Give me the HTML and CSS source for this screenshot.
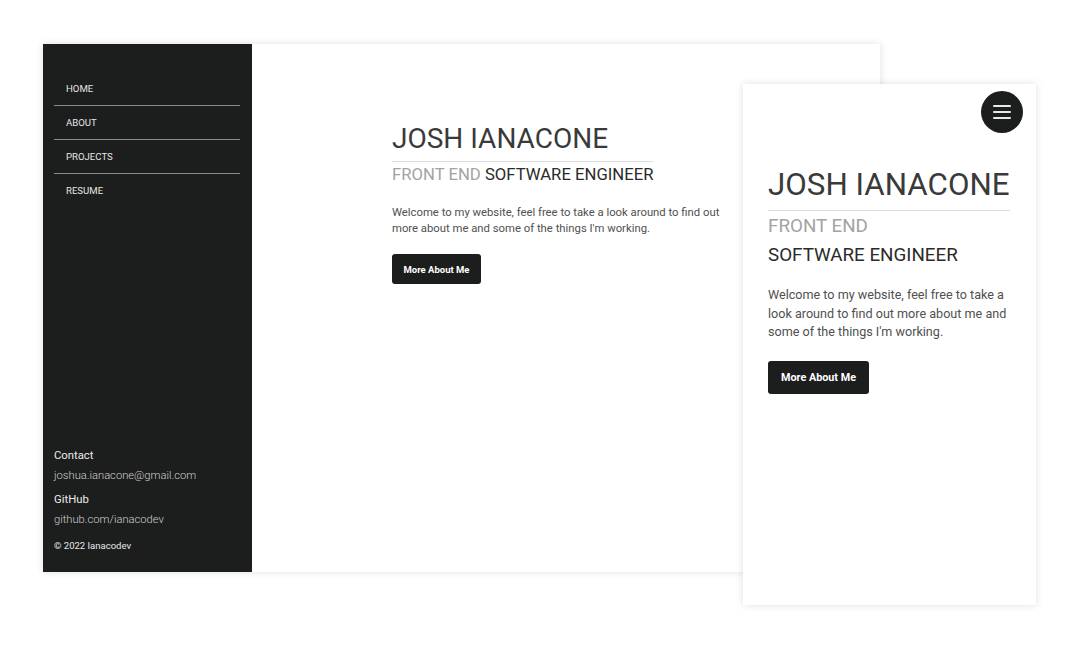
FILE: index.html
```html
<!DOCTYPE html>
<html lang="en">
<head>
<meta charset="utf-8">
<title>Josh Ianacone</title>
<link rel="stylesheet" href="styles.css">
</head>
<body>
<div class="canvas">
  <div class="window desktop">
    <aside class="sidebar">
      <nav class="nav">
        <a class="nav-link" href="#">HOME</a>
        <a class="nav-link" href="#">ABOUT</a>
        <a class="nav-link" href="#">PROJECTS</a>
        <a class="nav-link" href="#">RESUME</a>
      </nav>
      <div class="side-footer">
        <div class="label">Contact</div>
        <div class="value">joshua.ianacone@gmail.com</div>
        <div class="label">GitHub</div>
        <div class="value">github.com/ianacodev</div>
        <div class="copy">© 2022 Ianacodev</div>
      </div>
    </aside>
    <main class="main">
      <section class="hero">
        <h1 class="name">JOSH IANACONE</h1>
        <h2 class="role"><span class="muted">FRONT END</span> SOFTWARE ENGINEER</h2>
        <p class="intro">Welcome to my website, feel free to take a look around to find out more about me and some of the things I'm working.</p>
        <a class="btn" href="#">More About Me</a>
      </section>
    </main>
  </div>

  <div class="window mobile">
    <div class="mobile-top">
      <button class="burger" aria-label="Menu">
        <svg width="18" height="14" viewBox="0 0 18 14"><rect x="0" y="0" width="18" height="2" rx="1" fill="#e8e8e8"/><rect x="0" y="6" width="18" height="2" rx="1" fill="#e8e8e8"/><rect x="0" y="12" width="18" height="2" rx="1" fill="#e8e8e8"/></svg>
      </button>
    </div>
    <section class="m-hero">
      <h1 class="m-name">JOSH IANACONE</h1>
      <div class="m-front">FRONT END</div>
      <div class="m-soft">SOFTWARE ENGINEER</div>
      <p class="m-intro">Welcome to my website, feel free to take a look around to find out more about me and some of the things I'm working.</p>
      <a class="m-btn" href="#">More About Me</a>
    </section>
  </div>
</div>
</body>
</html>
```

FILE: styles.css
```css
* { box-sizing: border-box; }
html, body { margin: 0; padding: 0; background: #ffffff; }
body { font-family: Roboto, "Liberation Sans", Arial, sans-serif; width: 1079px; height: 648px; overflow: hidden; }
.canvas { position: relative; width: 1079px; height: 648px; }
.window { position: absolute; background: #fff; box-shadow: 0 0 8px rgba(0,0,0,0.12); }
.desktop { left: 43px; top: 44px; width: 837px; height: 528px; display: flex; }
.sidebar { width: 209px; background: #1c1d1d; display: flex; flex-direction: column; justify-content: space-between; padding: 28px 12px 19px 11px; }
.nav { display: flex; flex-direction: column; }
.nav-link { display: block; height: 34px; line-height: 33px; padding-left: 12px; color: #e6e6e6; font-size: 9.6px; text-decoration: none; border-bottom: 1px solid #8a8a8a; }
.nav-link:last-child { border-bottom: none; }
.side-footer { display: flex; flex-direction: column; }
.label { color: #ececec; font-size: 11.3px; line-height: 16px; margin-bottom: 4px; }
.value { color: #d0d0d0; font-size: 11.2px; font-weight: 300; line-height: 16px; margin-bottom: 8px; }
.copy { color: #e8e8e8; font-size: 9.5px; line-height: 14px; margin-top: 3px; }
.main { flex: 1; display: flex; justify-content: center; padding-top: 78px; }
.hero { width: 348px; }
.name { margin: 0; font-size: 28px; font-weight: 400; color: #3a3a3a; line-height: 34px; padding-bottom: 5px; border-bottom: 1px solid #dddddd; width: 261px; }
.role { margin: 2px 0 0; font-size: 16.7px; font-weight: 400; color: #2b2b2b; line-height: 22px; white-space: nowrap; }
.muted { color: #a3a3a3; }
.intro { margin: 19px 0 0; max-width: 334px; font-size: 11.3px; line-height: 16px; color: #505050; }
.btn { display: flex; align-items: center; justify-content: center; margin-top: 17px; width: 89px; height: 30px; background: #1c1d1d; color: #fff; font-size: 9.5px; font-weight: 700; text-decoration: none; border-radius: 3px; }
.mobile { left: 743px; top: 84px; width: 293px; height: 521px; }
.mobile-top { display: flex; justify-content: flex-end; padding: 7px 13px 0 0; }
.burger { width: 42px; height: 42px; border-radius: 50%; background: #1c1d1d; border: none; display: flex; align-items: center; justify-content: center; padding: 0; }
.m-hero { padding: 33px 26px 0 25px; }
.m-name { margin: 0; font-size: 31.3px; font-weight: 400; color: #3a3a3a; line-height: 38px; padding-bottom: 6px; border-bottom: 1px solid #dddddd; white-space: nowrap; }
.m-front { margin-top: 4px; font-size: 18.8px; color: #a3a3a3; line-height: 22px; }
.m-soft { margin-top: 7px; font-size: 18.8px; color: #2b2b2b; line-height: 22px; }
.m-intro { margin: 20px 0 0; font-size: 12.6px; line-height: 18.5px; color: #505050; }
.m-btn { display: flex; align-items: center; justify-content: center; margin-top: 19px; width: 101px; height: 33px; background: #1c1d1d; color: #fff; font-size: 10.8px; font-weight: 700; text-decoration: none; border-radius: 3px; }
```
